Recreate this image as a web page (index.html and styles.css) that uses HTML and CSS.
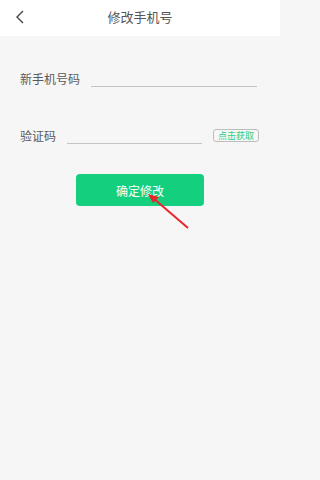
FILE: index.html
```html
<!DOCTYPE html>
<html lang="zh">
<head>
<meta charset="utf-8">
<link rel="stylesheet" href="styles.css">
</head>
<body>
<div class="page">
  <header class="topbar">
    <svg class="back" width="10" height="14" viewBox="0 0 10 14"><path d="M8 1 L2 7 L8 13" fill="none" stroke="#444" stroke-width="1.4"/></svg>
    <div class="title">修改手机号</div>
  </header>
  <main class="content">
    <div class="row row-phone">
      <span class="label">新手机号码</span>
      <div class="field"></div>
    </div>
    <div class="row row-code">
      <span class="label">验证码</span>
      <div class="field"></div>
      <span class="getcode">点击获取</span>
    </div>
    <div class="btnwrap">
      <div class="submit">确定修改</div>
    </div>
    <svg class="arrow" width="280" height="480" viewBox="0 0 280 480">
      <line x1="188" y1="228" x2="153" y2="198" stroke="#e8262a" stroke-width="2"/>
      <polygon points="148,194 159,197 153,203" fill="#e8262a"/>
    </svg>
  </main>
</div>
</body>
</html>
```
FILE: styles.css
```css
html, body {
  margin: 0;
  padding: 0;
}
body {
  font-family: "Noto Sans CJK SC", "Noto Sans", sans-serif;
  background: #f6f6f6;
}
.page {
  width: 280px;
  height: 480px;
  position: relative;
  background: #f6f6f6;
}
.topbar {
  height: 36px;
  background: #fff;
  display: flex;
  align-items: center;
  justify-content: center;
  position: relative;
}
.back {
  position: absolute;
  left: 15px;
  top: 10px;
}
.title {
  font-size: 13px;
  color: #555;
  line-height: 1;
  margin-top: -3px;
}
.content {
  padding-top: 34px;
}
.row {
  display: flex;
  align-items: center;
  padding-left: 20px;
}
.row-phone {
  padding-right: 23px;
}
.row-code {
  margin-top: 40px;
  padding-right: 21px;
}
.label {
  font-size: 12px;
  color: #5a5a5a;
  line-height: 1;
  margin-right: 11px;
}
.field {
  flex: 1;
  height: 16px;
  border-bottom: 1px solid #c4c4c4;
}
.getcode {
  margin-left: 11px;
  font-size: 9px;
  line-height: 9px;
  color: #2ccf85;
  border: 1px solid #bdbdbd;
  border-radius: 3px;
  padding: 1px 4px;
}
.btnwrap {
  display: flex;
  justify-content: center;
  margin-top: 30px;
}
.submit {
  width: 128px;
  height: 32px;
  border-radius: 4px;
  background: #14cf7e;
  color: #fff;
  font-size: 12px;
  display: flex;
  align-items: center;
  justify-content: center;
}
.arrow {
  position: absolute;
  left: 0;
  top: 0;
  pointer-events: none;
}
```
